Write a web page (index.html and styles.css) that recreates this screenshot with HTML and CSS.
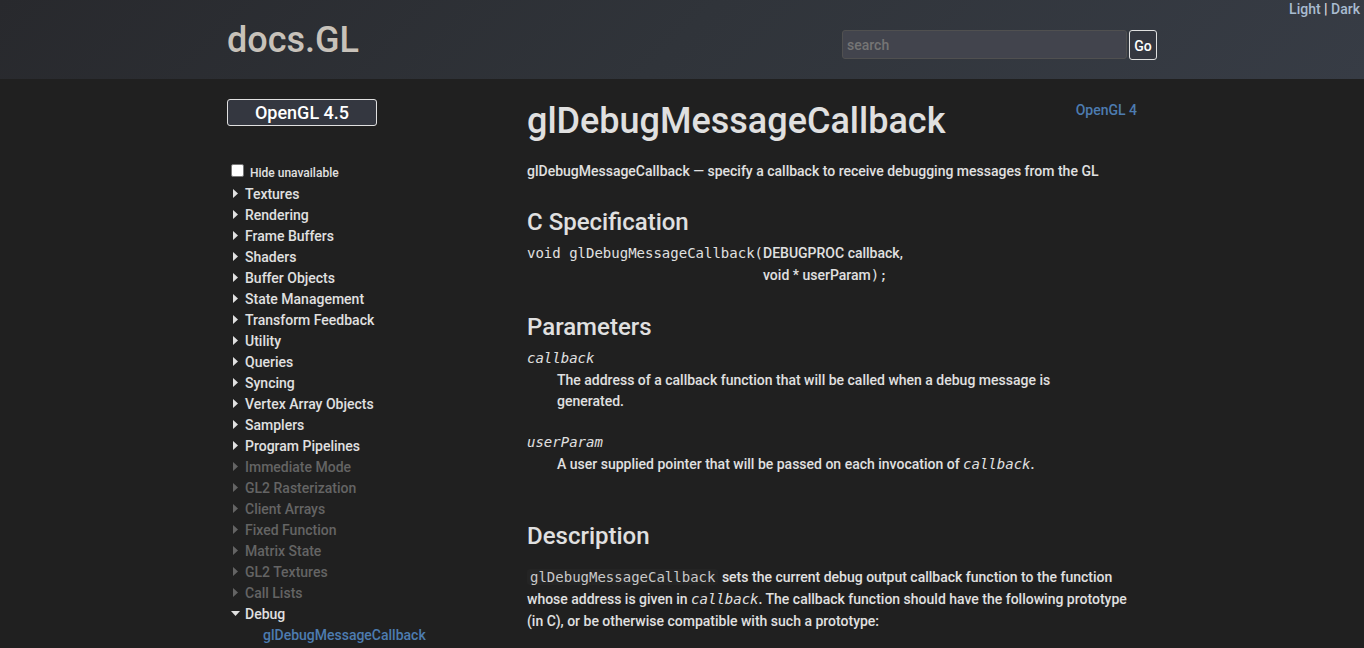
FILE: index.html
```html
<!DOCTYPE html>
<html lang="en">
<head>
<meta charset="utf-8">
<title>glDebugMessageCallback - OpenGL 4 - docs.gl</title>
<link rel="stylesheet" href="styles.css">
</head>
<body>
<header class="header">
  <nav class="themes"><a href="#light">Light</a> | <a href="#dark">Dark</a></nav>
  <div class="wrap header-row">
    <a class="logo" href="#home">docs.GL</a>
    <form class="search">
      <input class="search-box" type="text" placeholder="search" aria-label="search">
      <button class="go" type="button">Go</button>
    </form>
  </div>
</header>
<div class="wrap columns">
  <aside class="sidebar">
    <button class="version" type="button">OpenGL 4.5</button>
    <label class="hide"><input class="tick" type="checkbox"> Hide unavailable</label>
    <ul class="tree">
      <li><button class="node" type="button">Textures</button></li>
      <li><button class="node" type="button">Rendering</button></li>
      <li><button class="node" type="button">Frame Buffers</button></li>
      <li><button class="node" type="button">Shaders</button></li>
      <li><button class="node" type="button">Buffer Objects</button></li>
      <li><button class="node" type="button">State Management</button></li>
      <li><button class="node" type="button">Transform Feedback</button></li>
      <li><button class="node" type="button">Utility</button></li>
      <li><button class="node" type="button">Queries</button></li>
      <li><button class="node" type="button">Syncing</button></li>
      <li><button class="node" type="button">Vertex Array Objects</button></li>
      <li><button class="node" type="button">Samplers</button></li>
      <li><button class="node" type="button">Program Pipelines</button></li>
      <li><button class="node off" type="button">Immediate Mode</button></li>
      <li><button class="node off" type="button">GL2 Rasterization</button></li>
      <li><button class="node off" type="button">Client Arrays</button></li>
      <li><button class="node off" type="button">Fixed Function</button></li>
      <li><button class="node off" type="button">Matrix State</button></li>
      <li><button class="node off" type="button">GL2 Textures</button></li>
      <li><button class="node off" type="button">Call Lists</button></li>
      <li><button class="node open" type="button" aria-expanded="true">Debug</button>
        <ul class="leaves"><li><a href="#glDebugMessageCallback">glDebugMessageCallback</a></li></ul>
      </li>
    </ul>
  </aside>
  <main class="content">
    <div class="title-row">
      <h1 class="title">glDebugMessageCallback</h1>
      <a class="api" href="#gl4">OpenGL 4</a>
    </div>
    <p class="purpose">glDebugMessageCallback — specify a callback to receive debugging messages from the GL</p>
    <h2 class="heading">C Specification</h2>
    <table class="proto">
      <tr><td><code>void <b class="fn">glDebugMessageCallback</b>(</code></td><td>DEBUGPROC callback,</td></tr>
      <tr><td></td><td>void * userParam<code>);</code></td></tr>
    </table>
    <h2 class="heading">Parameters</h2>
    <dl class="params">
      <dt><var>callback</var></dt>
      <dd>The address of a callback function that will be called when a debug message is generated.</dd>
      <dt><var>userParam</var></dt>
      <dd>A user supplied pointer that will be passed on each invocation of <var>callback</var>.</dd>
    </dl>
    <h2 class="heading">Description</h2>
    <p class="description"><code class="chip">glDebugMessageCallback</code> sets the current debug output callback function to the function whose address is given in <var>callback</var>. The callback function should have the following prototype (in C), or be otherwise compatible with such a prototype:</p>
  </main>
</div>
</body>
</html>
```
FILE: styles.css
```css
* { box-sizing: border-box; }
body {
  margin: 0;
  background: #202020;
  color: #e0e0e0;
  font: 500 14px/21px Roboto, sans-serif;
}
a { color: #4d7cb0; text-decoration: none; }
button, input { font: inherit; }
.wrap { max-width: 950px; margin: 0 auto; padding-left: 20px; }
.header {
  position: relative;
  padding: 20px 0 19px;
  background: linear-gradient(135deg, #28292d, #30343a 50%, #373c45);
}
.themes { position: absolute; top: 0; right: 4px; line-height: 19px; }
.themes a { color: #a9bcd0; }
.header-row { display: flex; justify-content: space-between; align-items: flex-start; }
.logo { color: #c8c2ba; font-size: 36px; line-height: 40px; }
.search { display: flex; gap: 2px; padding-top: 10px; }
.search-box {
  width: 285px;
  height: 29px;
  padding: 0 4px;
  border: 1px solid #505050;
  border-radius: 3px;
  background: #42444d;
  color: #e0e0e0;
}
.search-box::placeholder { color: #757575; }
.go {
  width: 28px;
  height: 30px;
  padding: 2px 0 0;
  border: 1px solid #e0e0e0;
  border-radius: 3px;
  background: #343740;
  color: #fff;
}
.columns { display: flex; padding-right: 20px; }
.sidebar { flex: 0 0 300px; padding-top: 20px; }
.version {
  display: block;
  width: 150px;
  height: 27px;
  padding: 0;
  border: 1px solid #e0e0e0;
  border-radius: 3px;
  background: #343740;
  color: #fff;
  font-size: 18px;
}
.hide { display: flex; align-items: center; gap: 6px; margin-top: 37px; padding-left: 4px; font-size: 12px; }
.tick {
  appearance: none;
  width: 13px;
  height: 13px;
  margin: 0 0 6px;
  border: 1px solid #767676;
  border-radius: 2px;
  background: #fff;
}
.tree, .leaves { margin: 0; padding: 0; list-style: none; }
.node {
  display: flex;
  align-items: center;
  padding: 0 0 0 6px;
  border: 0;
  background: none;
  color: inherit;
}
.node::before {
  content: "";
  width: 5px;
  height: 9px;
  margin: 0 7px 2px 0;
  background: currentColor;
  clip-path: polygon(0 0, 100% 50%, 0 100%);
}
.open { padding-left: 4px; }
.open::before { width: 9px; height: 5px; margin-right: 5px; clip-path: polygon(0 0, 100% 0, 50% 100%); }
.off { color: #646464; }
.leaves { padding-left: 36px; }
.content { flex: 1; min-width: 0; padding-top: 20px; }
.title-row { display: flex; justify-content: space-between; align-items: flex-start; }
.title { margin: 0; font-size: 36px; font-weight: 500; line-height: 44px; }
.api { padding-top: 1px; }
.purpose { margin: 18px 0 21px; }
.heading { margin: 0 0 1px; font-size: 24px; font-weight: 500; line-height: 38px; }
code, var { font-family: "DejaVu Sans Mono", monospace; font-size: 14px; font-weight: 400; }
.proto { border-spacing: 0; margin-bottom: 22px; line-height: 22px; }
.proto td { padding: 0; }
.fn { font-weight: 400; }
.params { margin: 0 0 42px; }
.params dt { line-height: 23px; }
.params dd { margin: 0 60px 19px 30px; }
.description { margin: 11px 0 16px; line-height: 22px; }
.chip { padding: 0 3px; border-radius: 3px; background: #242424; color: #c8c8c8; }
```
